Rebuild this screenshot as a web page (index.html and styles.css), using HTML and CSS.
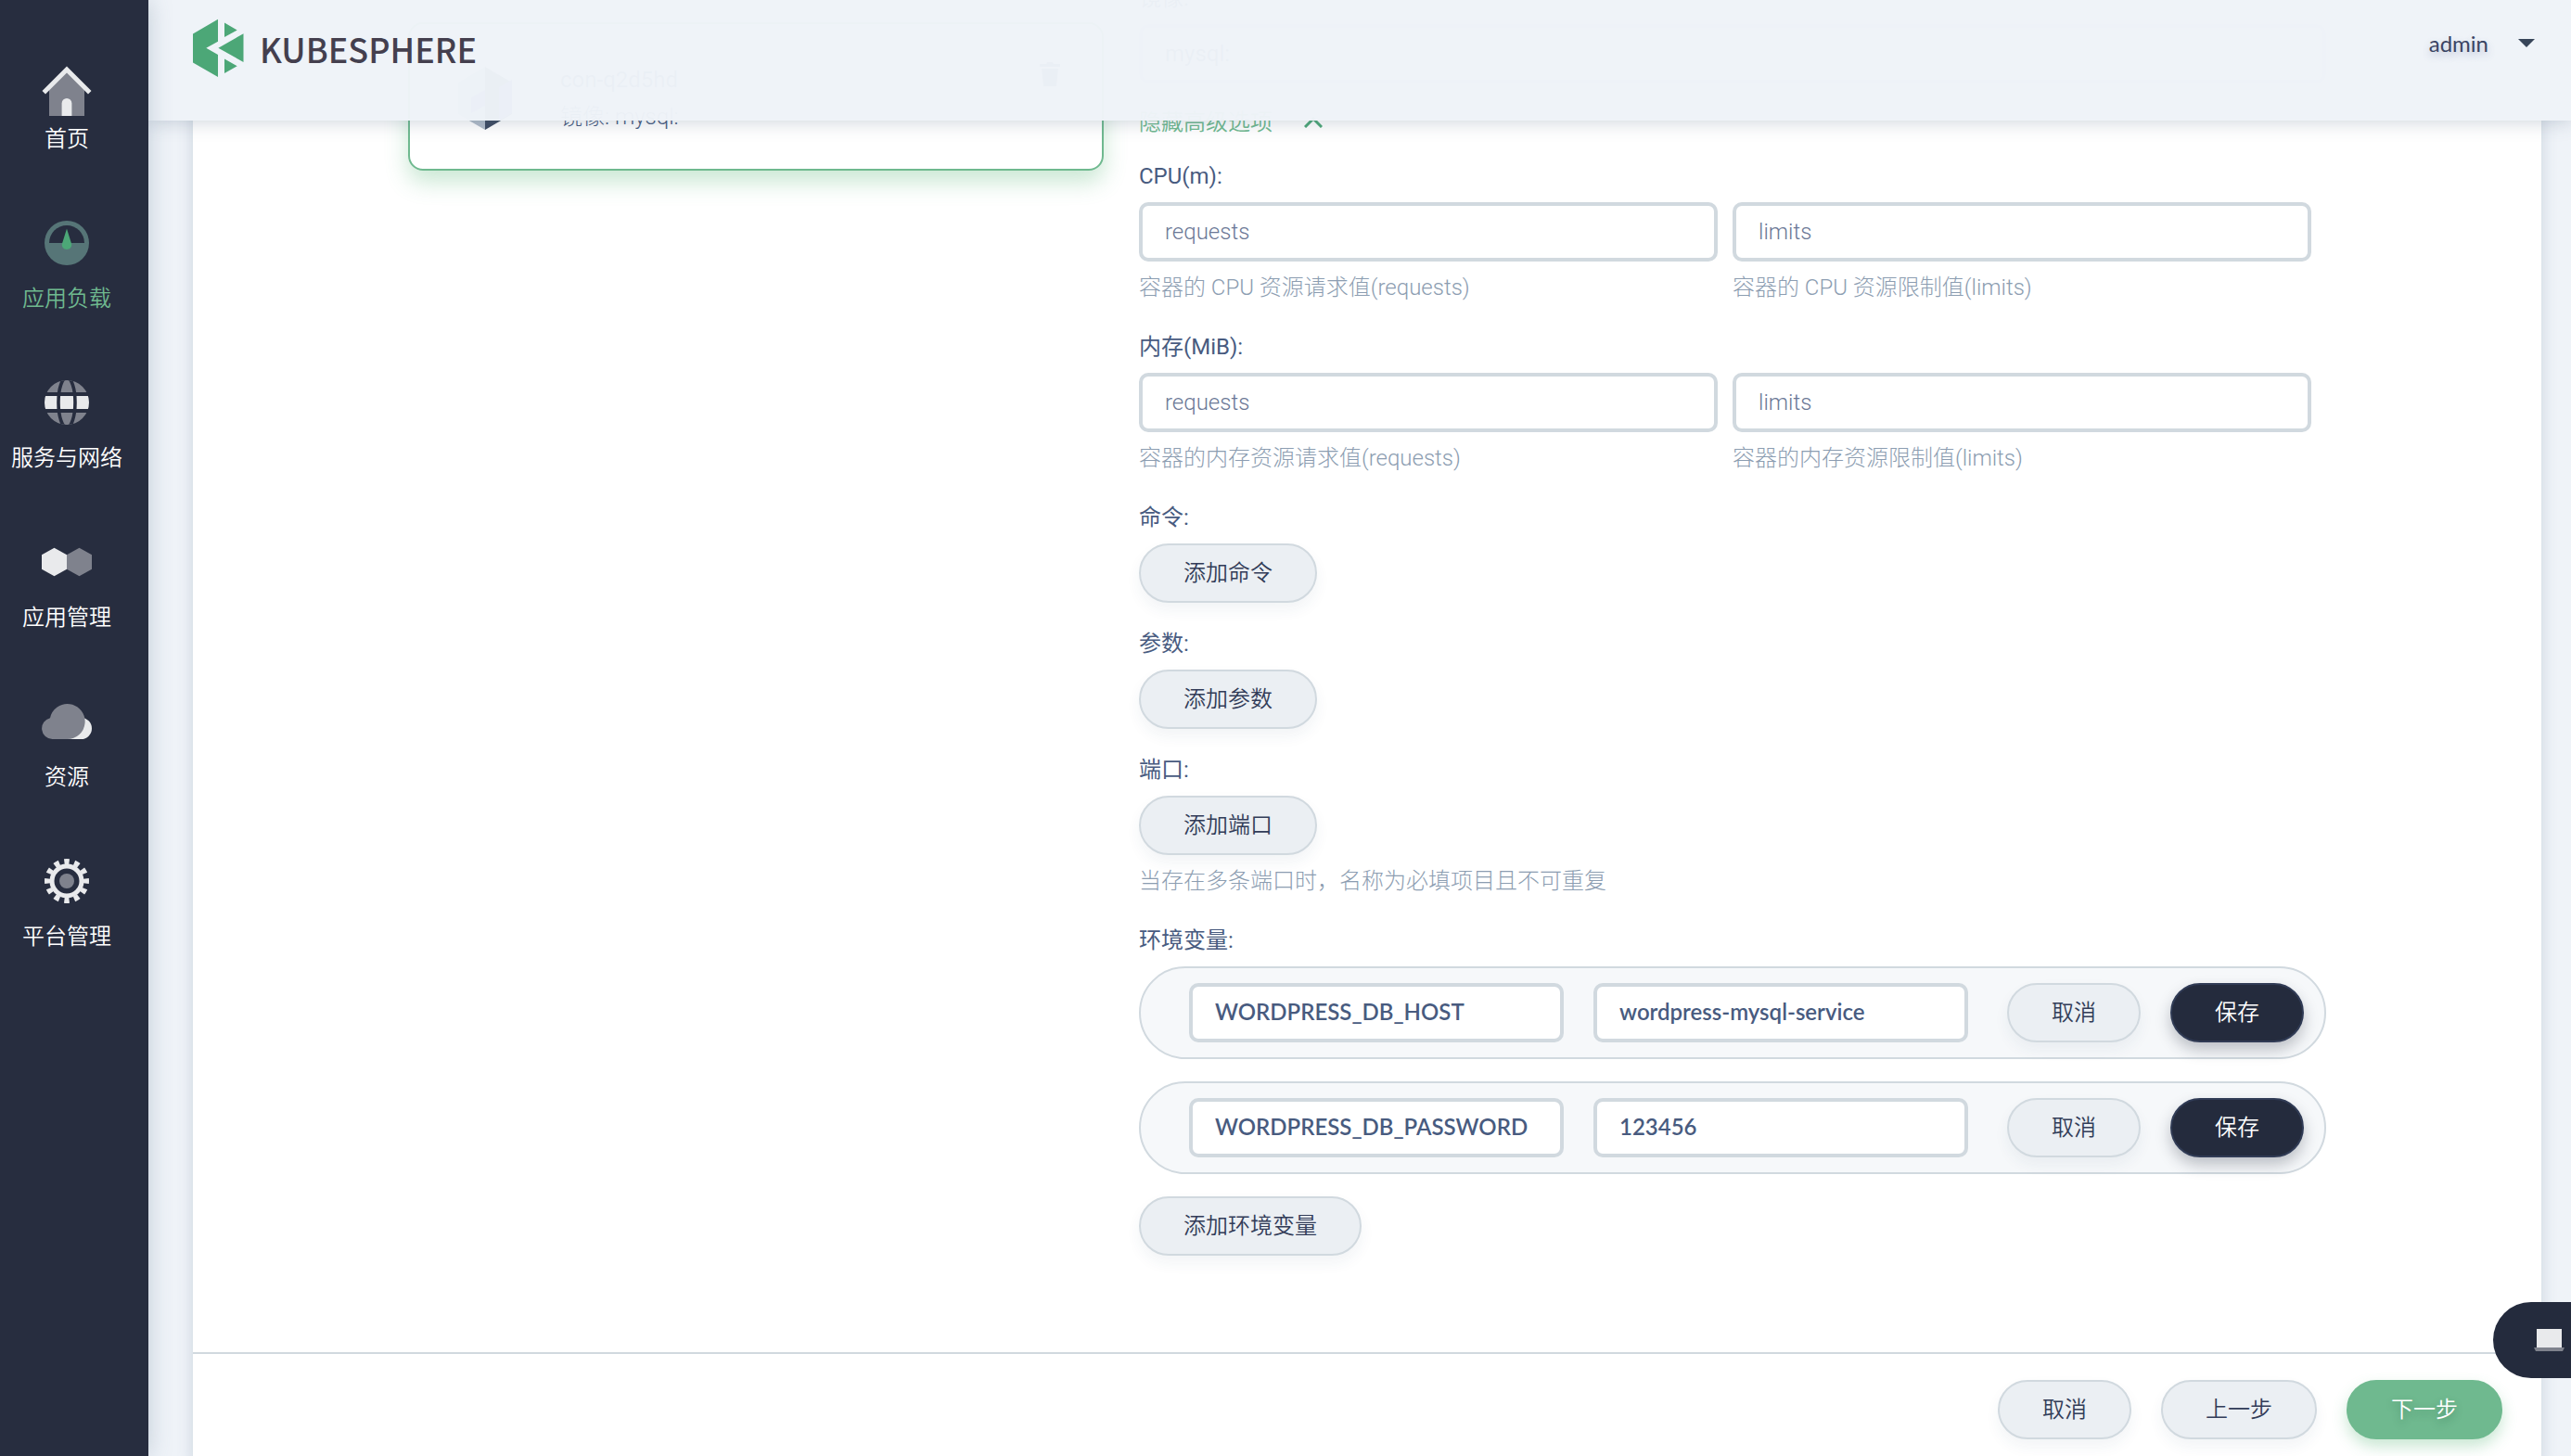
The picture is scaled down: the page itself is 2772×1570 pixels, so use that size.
FILE: index.html
```html
<!DOCTYPE html>
<html lang="zh-CN">
<head>
<meta charset="utf-8">
<title>KubeSphere</title>
<link rel="stylesheet" href="styles.css">
</head>
<body>
<div class="app">
  <nav class="sidebar">
    <a class="nav-item" href="#home">
      <svg class="nav-icon" viewBox="0 0 80 80" aria-hidden="true">
        <path class="dim" d="M21 46 40 27 59 46V75H21Z"/>
        <path class="lit" d="M40 21.5 66.5 48 63 51.5 40 28.5 17 51.5 13.500 48Z"/>
        <path class="lit" d="M34.600 75V61.400a5.400 5.400 0 0 1 10.800 0V75Z"/>
      </svg>
      <span>首页</span>
    </a>
    <a class="nav-item active" href="#workloads">
      <svg class="nav-icon" viewBox="0 0 80 80" aria-hidden="true">
        <circle class="dim" cx="40" cy="40" r="24"/>
        <path class="hole" d="M21 40a19 19 0 0 1 38 0Z"/>
        <path class="lit" d="M40 24.500 45 40.500C46 44 43.500 47 40 47S34 44 35 40.500Z"/>
      </svg>
      <span>应用负载</span>
    </a>
    <a class="nav-item" href="#network">
      <svg class="nav-icon" viewBox="0 0 80 80" aria-hidden="true">
        <clipPath id="globe"><circle cx="40" cy="40" r="24"/></clipPath>
        <g clip-path="url(#globe)">
          <path class="dim" d="M16 16H64V29H16ZM16 51H64V64H16Z"/>
          <path class="lit" d="M16 33H64V47H16Z"/>
          <ellipse class="cut" cx="40" cy="40" rx="9" ry="27"/>
        </g>
      </svg>
      <span>服务与网络</span>
    </a>
    <a class="nav-item" href="#apps">
      <svg class="nav-icon" viewBox="0 0 80 80" aria-hidden="true">
        <path class="lit" d="M26.500 24.700 40 32.200V47.800L26.500 55.300 13 47.800V32.200Z"/>
        <path class="dim" d="M53.500 24.700 67 32.200V47.800L53.500 55.300 40 47.800V32.200Z"/>
      </svg>
      <span>应用管理</span>
    </a>
    <a class="nav-item" href="#resources">
      <svg class="nav-icon" viewBox="0 0 80 80" aria-hidden="true">
        <path class="lit" d="M40 59V36H55.500a11.500 11.500 0 0 1 0 23Z"/>
        <path class="dim" d="M24.500 59a11.500 11.500 0 0 1-2.500-22.700A19 19 0 1 1 40 59Z"/>
      </svg>
      <span>资源</span>
    </a>
    <a class="nav-item" href="#platform">
      <svg class="nav-icon" viewBox="0 0 80 80" aria-hidden="true">
        <circle class="ring" cx="40" cy="40" r="16"/>
        <circle class="teeth" cx="40" cy="40" r="21" pathLength="240"/>
        <circle class="dim" cx="40" cy="40" r="8"/>
      </svg>
      <span>平台管理</span>
    </a>
  </nav>

  <div class="page">
    <header class="topbar">
      <a class="brand" href="#home">
        <svg class="brand-mark" viewBox="0 0 56 64" aria-hidden="true">
          <path d="M0 16.500 27 .7V24.800L14.300 31.800 27 39V63L0 47.500ZM34 4.400 47.700 12.400 34 20ZM27.400 31.700 54.500 16.200V47ZM34 43.400 47.700 51.300 34 58.900Z"/>
        </svg>
        <span>KUBESPHERE</span>
      </a>
      <button class="user" type="button">
        <span>admin</span>
        <svg class="caret" viewBox="0 0 18 10" aria-hidden="true"><path d="M0 0H18L9 9Z"/></svg>
      </button>
    </header>

    <main class="panel">
      <div class="columns">
        <section class="containers">
          <article class="container-card">
            <svg class="container-icon" viewBox="0 0 58 68" aria-hidden="true">
              <path fill="#b1bcc9" d="M29 0 0 17V51L29 68Z"/>
              <path fill="#3d4b61" d="M29 0 58 17V51L29 68Z"/>
              <path fill="#5768c8" d="M44 22 58 14V50L44 58ZM14 33 29 25V42L14 50Z"/>
            </svg>
            <div class="container-text">
              <strong>con-q2d5hd</strong>
              <p>镜像: mysql:</p>
            </div>
            <button class="trash" type="button" aria-label="删除">
              <svg viewBox="0 0 24 28" aria-hidden="true"><path d="M1 3H8L9 1H15L16 3H23V6H1ZM3 8H21L19 27H5Z"/></svg>
            </button>
          </article>
        </section>

        <form class="form">
          <div class="field">
            <label for="image">镜像:</label>
            <input id="image" class="input" type="text" value="mysql:">
          </div>
          <button class="toggle" type="button">
            <span>隐藏高级选项</span>
            <svg class="chevron" viewBox="0 0 20 12" aria-hidden="true"><path d="M1 11 10 2 19 11"/></svg>
          </button>

          <div class="field">
            <label for="cpu-requests">CPU(m):</label>
            <div class="pair">
              <div class="cell">
                <input id="cpu-requests" class="input" type="text" placeholder="requests">
                <p class="hint">容器的 CPU 资源请求值(requests)</p>
              </div>
              <div class="cell">
                <input class="input" type="text" placeholder="limits" aria-label="CPU limits">
                <p class="hint">容器的 CPU 资源限制值(limits)</p>
              </div>
            </div>
          </div>

          <div class="field">
            <label for="memory-requests">内存(MiB):</label>
            <div class="pair">
              <div class="cell">
                <input id="memory-requests" class="input" type="text" placeholder="requests">
                <p class="hint">容器的内存资源请求值(requests)</p>
              </div>
              <div class="cell">
                <input class="input" type="text" placeholder="limits" aria-label="内存 limits">
                <p class="hint">容器的内存资源限制值(limits)</p>
              </div>
            </div>
          </div>

          <div class="field">
            <label for="add-command">命令:</label>
            <button id="add-command" class="btn" type="button">添加命令</button>
          </div>
          <div class="field">
            <label for="add-arg">参数:</label>
            <button id="add-arg" class="btn" type="button">添加参数</button>
          </div>
          <div class="field">
            <label for="add-port">端口:</label>
            <button id="add-port" class="btn" type="button">添加端口</button>
            <p class="hint">当存在多条端口时，名称为必填项目且不可重复</p>
          </div>

          <div class="field">
            <label for="env-name-1">环境变量:</label>
            <div class="env-list">
              <div class="env-row">
                <div class="env-inputs">
                  <input id="env-name-1" class="input value" type="text" value="WORDPRESS_DB_HOST">
                  <input class="input value" type="text" value="wordpress-mysql-service" aria-label="值">
                </div>
                <div class="actions">
                  <button class="btn" type="button">取消</button>
                  <button class="btn dark" type="button">保存</button>
                </div>
              </div>
              <div class="env-row">
                <div class="env-inputs">
                  <input class="input value" type="text" value="WORDPRESS_DB_PASSWORD" aria-label="名称">
                  <input class="input value" type="text" value="123456" aria-label="值">
                </div>
                <div class="actions">
                  <button class="btn" type="button">取消</button>
                  <button class="btn dark" type="button">保存</button>
                </div>
              </div>
              <button class="btn" type="button">添加环境变量</button>
            </div>
          </div>
        </form>
      </div>

      <footer class="footer actions">
        <button class="btn" type="button">取消</button>
        <button class="btn" type="button">上一步</button>
        <button class="btn primary" type="button">下一步</button>
      </footer>
    </main>
  </div>

  <button class="terminal" type="button" aria-label="终端">
    <svg viewBox="0 0 34 26" aria-hidden="true">
      <path class="lit" d="M3 1H30V21H3Z"/>
      <path class="dim" d="M0 21H33L31 25H2Z"/>
    </svg>
  </button>
</div>
</body>
</html>
```
FILE: styles.css
```css
* {
  box-sizing: border-box;
}

body {
  margin: 0;
  background: #eff3f8;
  color: #485b7f;
  font: 24px/40px Roboto, "Noto Sans CJK SC", sans-serif;
}

p {
  margin: 0;
}

a {
  color: inherit;
  text-decoration: none;
}

button,
input {
  font: inherit;
}

button {
  padding: 0;
  border: 0;
  background: none;
  cursor: pointer;
}

.app {
  display: flex;
  height: 100vh;
  overflow: hidden;
}

/* Sidebar */

.sidebar {
  position: relative;
  z-index: 3;
  flex: none;
  display: flex;
  flex-direction: column;
  gap: 52px;
  width: 160px;
  padding: 50px 16px 0 0;
  background: #272d3f;
  box-shadow: 0 0 24px rgba(73, 100, 130, 0.28);
  color: #fff;
  font-weight: 350;
}

.nav-item {
  display: flex;
  flex-direction: column;
  align-items: center;
  white-space: nowrap;
}

.nav-item.active {
  color: #6fb98f;
}

.nav-icon {
  width: 80px;
  height: 80px;
}

.lit {
  fill: #e9eaec;
}

.dim {
  fill: #7f828d;
}

.hole {
  fill: #272d3f;
}

.active .lit {
  fill: #4ca777;
}

.active .dim {
  fill: #567577;
}

.cut {
  fill: none;
  stroke: #272d3f;
  stroke-width: 3.6;
}

.ring,
.teeth {
  fill: none;
  stroke: #e9eaec;
  stroke-width: 5;
}

.teeth {
  stroke-width: 6;
  stroke-dasharray: 10 10;
  stroke-dashoffset: 5;
}

/* Top bar */

.page {
  flex: 1;
  min-width: 0;
}

.topbar {
  position: relative;
  z-index: 2;
  display: flex;
  justify-content: space-between;
  align-items: flex-start;
  height: 130px;
  padding: 20px 39px 0 48px;
  background: rgba(239, 243, 248, 0.975);
  box-shadow: 0 0 20px rgba(73, 95, 123, 0.3);
}

.brand {
  display: flex;
  align-items: center;
  gap: 16px;
  color: #443f4e;
  font: 500 36px/64px "Noto Sans CJK SC", sans-serif;
}

.brand-mark {
  width: 56px;
  height: 64px;
  fill: #4ca777;
}

.user {
  display: flex;
  align-items: center;
  gap: 32px;
  height: 54px;
  color: #3b4564;
  font-family: Lato, sans-serif;
  text-shadow: 0 4px 8px rgba(73, 85, 143, 0.3);
}

.caret {
  width: 18px;
  height: 10px;
  fill: #374559;
}

/* Panel, scrolled part of the way under the top bar */

.panel {
  margin: -192px 32px 0 48px;
  padding-top: 40px;
  background: #fff;
  box-shadow: 0 0 16px rgba(73, 100, 130, 0.22);
}

.columns {
  display: grid;
  grid-template-columns: 750fr 1280fr;
  gap: 38px;
  padding: 0 232px 104px;
}

.containers {
  padding-top: 46px;
}

.container-card {
  display: flex;
  align-items: flex-start;
  height: 160px;
  padding: 40px 44px 0 52px;
  border: 2px solid #6fb98f;
  border-radius: 16px;
  box-shadow: 0 12px 24px rgba(75, 175, 110, 0.3);
}

.container-icon {
  flex: none;
  width: 58px;
  height: 68px;
  margin-top: 6px;
}

.container-text {
  flex: 1;
  margin-left: 52px;
  font-weight: 300;
}

.container-text strong {
  font-weight: 400;
}

.trash svg {
  display: block;
  width: 24px;
  height: 28px;
  fill: #485b7f;
}

/* Form */

.form {
  display: flex;
  flex-direction: column;
  align-items: stretch;
  gap: 24px;
}

.field {
  display: flex;
  flex-direction: column;
  align-items: flex-start;
  gap: 8px;
}

.pair {
  display: grid;
  grid-template-columns: 1fr 1fr;
  gap: 16px;
  width: 100%;
  padding-right: 16px;
}

.cell {
  display: flex;
  flex-direction: column;
  gap: 8px;
}

.input {
  width: 100%;
  height: 64px;
  padding: 0 24px;
  border: 4px solid #d1d9df;
  border-radius: 10px;
  background: #fff;
  color: #485b7f;
}

.input::placeholder {
  color: #6b7896;
  font-weight: 300;
  opacity: 1;
}

.value {
  padding-bottom: 4px;
  font-family: Lato, sans-serif;
  font-weight: 600;
}

.hint {
  color: #8c9db1;
  font-weight: 300;
}

.toggle {
  display: flex;
  align-items: center;
  align-self: flex-start;
  gap: 34px;
  height: 32px;
  padding-top: 4px;
  color: #6fb98f;
  font-weight: 350;
}

.chevron {
  width: 20px;
  height: 12px;
  fill: none;
  stroke: #4ca777;
  stroke-width: 3;
}

.btn {
  height: 64px;
  padding: 0 46px;
  border: 2px solid #d1d9df;
  border-radius: 32px;
  background: #ebeff3;
  box-shadow: 0 8px 16px rgba(35, 65, 105, 0.06);
  color: #323c58;
  font-weight: 350;
  white-space: nowrap;
}

.btn.dark {
  border-color: #303b55;
  background: #242b3d;
  box-shadow: 0 8px 16px rgba(36, 43, 61, 0.28);
  color: #fff;
}

.btn.primary {
  border-color: #6fb98f;
  background: #6fb98f;
  box-shadow: 0 8px 16px rgba(75, 175, 110, 0.3);
  color: #fff;
  text-shadow: 0 4px 8px rgba(30, 90, 60, 0.4);
}

.env-list {
  display: flex;
  flex-direction: column;
  align-items: flex-start;
  gap: 24px;
  width: 100%;
}

.env-row {
  display: flex;
  gap: 42px;
  width: 100%;
  padding: 16px 22px 16px 52px;
  border: 2px solid #d1d9df;
  border-radius: 50px;
  background: #f6f8fa;
}

.env-inputs {
  flex: 1;
  display: grid;
  grid-template-columns: 1fr 1fr;
  gap: 32px;
}

.actions {
  display: flex;
  gap: 32px;
}

.footer {
  justify-content: flex-end;
  padding: 28px 42px;
  border-top: 2px solid #d1d9df;
}

/* Floating terminal tab on the window's right edge */

.terminal {
  position: fixed;
  z-index: 4;
  right: 0;
  bottom: 84px;
  width: 84px;
  height: 82px;
  padding-left: 44px;
  border-radius: 41px 0 0 41px;
  background: #242b3d;
}

.terminal svg {
  display: block;
  width: 34px;
  height: 26px;
}
```
